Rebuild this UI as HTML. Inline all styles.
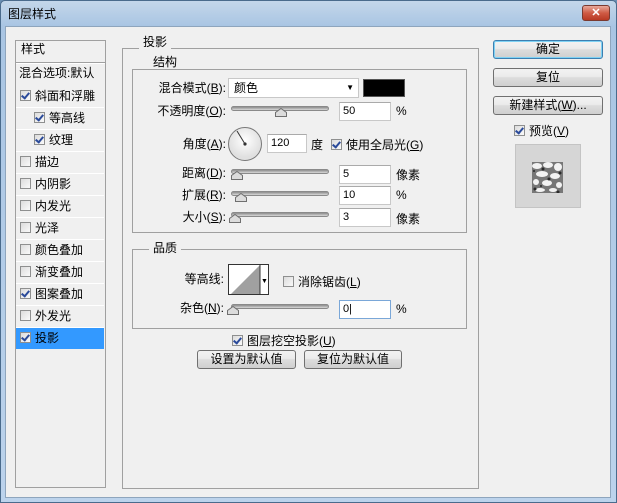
<!DOCTYPE html>
<html><head><meta charset="utf-8"><style>
*{box-sizing:border-box;margin:0;padding:0}
body{width:617px;height:503px;background:#6a8fb3;font-family:"Liberation Sans","Noto Sans CJK SC",sans-serif;font-size:12px;color:#000;position:relative;overflow:hidden}
.a{position:absolute}
#win{left:0;top:0;width:617px;height:503px;background:linear-gradient(#c4d7ea,#a9c5e3 25px,#bcd3ec);border:1px solid #4a6b8c;border-radius:5px 5px 0 0}
#client{left:5px;top:26px;width:606px;height:472px;background:#f0f0f0;border:1px solid #8ea5bd}
.title{left:8px;top:5px;font-size:12px;color:#000}
#close{left:582px;top:5px;width:28px;height:16px;border-radius:3px;border:1px solid #7a3a30;background:linear-gradient(#e8a89a,#cf5b45 50%,#b83a24);color:#fff;font-weight:bold;text-align:center;font-size:11px;line-height:14px}
.box{border:1px solid #a0a0a0}
.row{position:absolute;left:16px;width:88px;height:22px;border-bottom:1px solid #fff;font-size:12px;line-height:21px}
.cb{display:inline-block;width:11px;height:11px;border:1px solid #8e8f8f;background:linear-gradient(135deg,#dcdcdc,#fafafa);vertical-align:-1px;position:relative;margin-right:4px}
.cb.on:after{content:"";position:absolute;left:2px;top:0px;width:3px;height:6px;border:solid #2a4a9a;border-width:0 2px 2px 0;transform:rotate(40deg)}
.grp{border:1px solid #a0a0a0}
.gt{background:#f0f0f0;padding:0 4px;font-size:12px;line-height:14px}
.lbl{text-align:right;font-size:12px;line-height:14px}
.track{height:5px;border:1px solid #8a8a8a;border-radius:3px;background:linear-gradient(#8c8c8c,#d8d8d8)}
.thumb{width:12px;height:9px}
.inp{background:#fff;border:1px solid #c8c8c8;border-top-color:#aaa;height:19px;font-size:11px;line-height:17px;padding-left:3px}
.btn{border:1px solid #707070;border-radius:3px;background:linear-gradient(#f2f2f2,#ebebeb 45%,#dddddd 50%,#cfcfcf);text-align:center;font-size:12px;line-height:17px}
</style></head><body>
<div id="win" class="a"></div>
<div class="a title">图层样式</div>
<div id="close" class="a">✕</div>
<div id="client" class="a"></div>

<div class="a box" style="left:15px;top:40px;width:91px;height:448px;background:#f0f0f0"></div>
<div class="a" style="left:21px;top:41px;line-height:16px">样式</div>
<div class="a" style="left:16px;top:62px;width:89px;height:1px;background:#a0a0a0"></div>
<div class="a" style="left:16px;top:63px;width:89px;height:1px;background:#fff"></div>
<div class="a" style="left:19px;top:65px;line-height:16px;white-space:nowrap;width:86px;overflow:hidden">混合选项:默认</div>
<div class="row" style="top:86px;padding-left:4px"><span class="cb on"></span>斜面和浮雕</div>
<div class="row" style="top:108px;padding-left:18px"><span class="cb on"></span>等高线</div>
<div class="row" style="top:130px;padding-left:18px"><span class="cb on"></span>纹理</div>
<div class="row" style="top:152px;padding-left:4px"><span class="cb"></span>描边</div>
<div class="row" style="top:174px;padding-left:4px"><span class="cb"></span>内阴影</div>
<div class="row" style="top:196px;padding-left:4px"><span class="cb"></span>内发光</div>
<div class="row" style="top:218px;padding-left:4px"><span class="cb"></span>光泽</div>
<div class="row" style="top:240px;padding-left:4px"><span class="cb"></span>颜色叠加</div>
<div class="row" style="top:262px;padding-left:4px"><span class="cb"></span>渐变叠加</div>
<div class="row" style="top:284px;padding-left:4px"><span class="cb on"></span>图案叠加</div>
<div class="row" style="top:306px;padding-left:4px"><span class="cb"></span>外发光</div>
<div class="row" style="top:328px;padding-left:4px;background:#3399ff;border-bottom:none;height:21px"><span class="cb on"></span>投影</div>

<div class="a grp" style="left:122px;top:48px;width:357px;height:441px"></div>
<div class="a gt" style="left:139px;top:35px">投影</div>
<div class="a grp" style="left:132px;top:69px;width:335px;height:164px"></div>
<div class="a gt" style="left:149px;top:55px">结构</div>

<div class="a lbl" style="left:130px;top:81px;width:96px">混合模式(<u>B</u>):</div>
<div class="a" style="left:228px;top:78px;width:131px;height:20px;background:#fff;border:1px solid #c8c8c8;padding-left:5px;line-height:18px">颜色<span style="position:absolute;right:4px;top:0;font-size:8px">▼</span></div>
<div class="a" style="left:363px;top:79px;width:42px;height:18px;background:#000;border:1px solid #555"></div>

<svg width="0" height="0" style="position:absolute"><defs><symbol id="th" viewBox="0 0 12 9"><polygon points="6,0.5 11.5,4.5 11.5,8.5 0.5,8.5 0.5,4.5" fill="#dcdcdc" stroke="#6f6f6f"/></symbol></defs></svg>

<div class="a lbl" style="left:130px;top:104px;width:96px">不透明度(<u>O</u>):</div>
<div class="a track" style="left:231px;top:106px;width:98px"></div>
<svg class="a thumb" style="left:275px;top:108px"><use href="#th"/></svg>
<div class="a inp" style="left:339px;top:102px;width:52px">50</div>
<div class="a" style="left:396px;top:104px">%</div>

<div class="a lbl" style="left:130px;top:137px;width:96px">角度(<u>A</u>):</div>
<svg class="a" style="left:227px;top:126px" width="36" height="36"><defs><radialGradient id="g" cx="50%" cy="40%"><stop offset="0" stop-color="#fff"/><stop offset="1" stop-color="#e0e0e0"/></radialGradient></defs><circle cx="18" cy="18" r="16.5" fill="url(#g)" stroke="#777"/><line x1="18" y1="18" x2="10" y2="5" stroke="#333" stroke-width="1"/><circle cx="18" cy="18" r="1.6" fill="#333"/></svg>
<div class="a inp" style="left:267px;top:134px;width:40px">120</div>
<div class="a" style="left:311px;top:136px">度</div>
<div class="a" style="left:331px;top:136px"><span class="cb on"></span>使用全局光(<u>G</u>)</div>

<div class="a lbl" style="left:130px;top:166px;width:96px">距离(<u>D</u>):</div>
<div class="a track" style="left:231px;top:169px;width:98px"></div>
<svg class="a thumb" style="left:231px;top:171px"><use href="#th"/></svg>
<div class="a inp" style="left:339px;top:165px;width:52px">5</div>
<div class="a" style="left:396px;top:166px">像素</div>

<div class="a lbl" style="left:130px;top:188px;width:96px">扩展(<u>R</u>):</div>
<div class="a track" style="left:231px;top:191px;width:98px"></div>
<svg class="a thumb" style="left:235px;top:193px"><use href="#th"/></svg>
<div class="a inp" style="left:339px;top:186px;width:52px">10</div>
<div class="a" style="left:396px;top:188px">%</div>

<div class="a lbl" style="left:130px;top:210px;width:96px">大小(<u>S</u>):</div>
<div class="a track" style="left:231px;top:212px;width:98px"></div>
<svg class="a thumb" style="left:229px;top:214px"><use href="#th"/></svg>
<div class="a inp" style="left:339px;top:208px;width:52px">3</div>
<div class="a" style="left:396px;top:210px">像素</div>

<div class="a grp" style="left:132px;top:249px;width:335px;height:80px"></div>
<div class="a gt" style="left:149px;top:241px">品质</div>
<div class="a lbl" style="left:140px;top:272px;width:84px">等高线:</div>
<div class="a" style="left:228px;top:264px;width:41px;height:31px;border:1px solid #333;background:#fff"><svg width="39" height="29" style="position:absolute;left:0;top:0"><polygon points="2,29 31,0 31,29" fill="#a0a0a0"/><line x1="31" y1="0" x2="31" y2="29" stroke="#333"/><text x="32" y="18" font-size="7" fill="#000">▼</text></svg></div>
<div class="a" style="left:283px;top:273px"><span class="cb"></span>消除锯齿(<u>L</u>)</div>
<div class="a lbl" style="left:140px;top:301px;width:84px">杂色(<u>N</u>):</div>
<div class="a track" style="left:231px;top:304px;width:98px"></div>
<svg class="a thumb" style="left:227px;top:306px"><use href="#th"/></svg>
<div class="a inp" style="left:339px;top:300px;width:52px;border-color:#7aa7d8">0|</div>
<div class="a" style="left:396px;top:302px">%</div>

<div class="a" style="left:232px;top:332px"><span class="cb on"></span>图层挖空投影(<u>U</u>)</div>
<div class="a btn" style="left:197px;top:350px;width:99px;height:19px">设置为默认值</div>
<div class="a btn" style="left:304px;top:350px;width:98px;height:19px">复位为默认值</div>

<div class="a btn" style="left:493px;top:40px;width:110px;height:19px;border-color:#3c7fb1;box-shadow:inset 0 0 0 1px #7fd2f4">确定</div>
<div class="a btn" style="left:493px;top:68px;width:110px;height:19px">复位</div>
<div class="a btn" style="left:493px;top:96px;width:110px;height:19px">新建样式(<u>W</u>)...</div>
<div class="a" style="left:514px;top:122px"><span class="cb on"></span>预览(<u>V</u>)</div>
<div class="a" style="left:515px;top:144px;width:66px;height:64px;background:#d6d6d6;border:1px solid #c4c4c4"></div>
<svg class="a" style="left:532px;top:162px" width="31" height="31">
<rect width="31" height="31" fill="#777"/>
<g fill="#f2f2f2"><ellipse cx="5" cy="4" rx="5" ry="3"/><ellipse cx="16" cy="3" rx="5" ry="3"/><circle cx="26" cy="5" r="4"/><ellipse cx="10" cy="12" rx="6" ry="3"/><ellipse cx="23" cy="14" rx="5" ry="3"/><circle cx="4" cy="20" r="3"/><ellipse cx="15" cy="21" rx="5" ry="3"/><circle cx="27" cy="23" r="3"/><ellipse cx="8" cy="28" rx="5" ry="2"/><ellipse cx="21" cy="28" rx="4" ry="2"/></g>
<g fill="#2a2a2a"><circle cx="11" cy="7" r="1.5"/><circle cx="28" cy="11" r="1.5"/><circle cx="17" cy="17" r="1.5"/><circle cx="3" cy="27" r="1.5"/><circle cx="26" cy="30" r="1.5"/><circle cx="2" cy="9" r="1"/><circle cx="9" cy="24" r="1"/></g>
</svg>
</body></html>
